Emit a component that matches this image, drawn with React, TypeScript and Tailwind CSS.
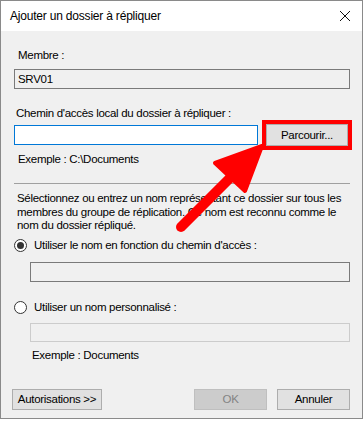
import React from 'react';

// Boîte de dialogue "Ajouter un dossier à répliquer" (DFS-R), avec la flèche rouge de l'annotation
const FONT = { fontFamily: '"Liberation Sans", Arial, sans-serif' };

const Radio = ({ checked, label }: { checked: boolean; label: string }) => (
  <div className="flex items-center h-[15px]">
    <span className="w-[13px] h-[13px] rounded-full border border-[#333333] bg-white flex items-center justify-center">
      {checked && <span className="w-[7px] h-[7px] rounded-full bg-[#333333]" />}
    </span>
    <span className="ml-[7px]">{label}</span>
  </div>
);

const App = () => {
  return (
    <div className="relative w-[364px] h-[421px] bg-white text-[11.5px] tracking-[-0.3px] leading-[15px] text-black" style={FONT}>
      <div className="w-[363px] h-[419px] border border-[#8a8a8a] flex flex-col bg-[#f0f0f0]">
        {/* Title bar */}
        <div className="h-[30px] bg-white flex items-center justify-between pl-[9px] pr-[9px] shrink-0">
          <span className="text-[12px] tracking-[-0.2px]">Ajouter un dossier à répliquer</span>
          <svg width="12" height="12" viewBox="0 0 12 12" className="mr-[2px]">
            <path d="M1 1 L11 11 M11 1 L1 11" stroke="#111" strokeWidth="1" />
          </svg>
        </div>

        {/* Body */}
        <div className="flex flex-col pl-[13px] pr-[12px]">
          <div className="mt-[17px] ml-[4px]">Membre :</div>
          <div className="mt-[6px] h-[20px] border border-[#7a7a7a] bg-[#f0f0f0] flex items-center pl-[3px]">SRV01</div>

          <div className="mt-[17px] ml-[2px]">Chemin d'accès local du dossier à répliquer :</div>
          <div className="mt-[3px] flex items-center">
            <div className="w-[244px] h-[20px] border border-[#0078d7] bg-white" />
            <div className="relative ml-[8px]">
              <div className="w-[82px] h-[22px] border border-[#adadad] bg-[#e1e1e1] flex items-center justify-center">Parcourir...</div>
              <div className="absolute -inset-[4px] border-[4px] border-[#ff0000]" />
            </div>
          </div>
          <div className="mt-[6px] ml-[4px]">Exemple : C:\Documents</div>

          <div className="mt-[16px] h-px bg-[#a0a0a0]" />

          <p className="mt-[8px] ml-[3px] leading-[13.5px]">
            Sélectionnez ou entrez un nom représentant ce dossier sur tous les
            <br />
            membres du groupe de réplication. Ce nom est reconnu comme le
            <br />
            nom du dossier répliqué.
          </p>

          <div className="mt-[5px]">
            <Radio checked label="Utiliser le nom en fonction du chemin d'accès :" />
          </div>
          <div className="mt-[9px] ml-[16px] h-[20px] border border-[#7a7a7a] bg-[#f0f0f0]" />

          <div className="mt-[18px]">
            <Radio checked={false} label="Utiliser un nom personnalisé :" />
          </div>
          <div className="mt-[8px] ml-[16px] h-[19px] border border-[#cccccc] bg-[#f0f0f0]" />
          <div className="mt-[6px] ml-[18px]">Exemple : Documents</div>

          <div className="mt-[26px] flex items-center">
            <div className="-ml-[2px] w-[90px] h-[21px] border border-[#adadad] bg-[#e1e1e1] flex items-center justify-center">Autorisations &gt;&gt;</div>
            <div className="ml-auto w-[73px] h-[21px] border border-[#bfbfbf] bg-[#cccccc] text-[#838383] flex items-center justify-center">OK</div>
            <div className="ml-[10px] w-[73px] h-[21px] border border-[#adadad] bg-[#e1e1e1] flex items-center justify-center">Annuler</div>
          </div>
        </div>
      </div>

      {/* Annotation arrow */}
      <svg className="absolute inset-0 pointer-events-none" width="364" height="421" viewBox="0 0 364 421">
        <line x1="181" y1="227" x2="234" y2="174" stroke="#ff0000" strokeWidth="10" strokeLinecap="round" />
        <polygon points="262,146 215,163 245,191" fill="#ff0000" stroke="#ff0000" strokeWidth="4" strokeLinejoin="round" />
      </svg>
    </div>
  );
};

export default App;
